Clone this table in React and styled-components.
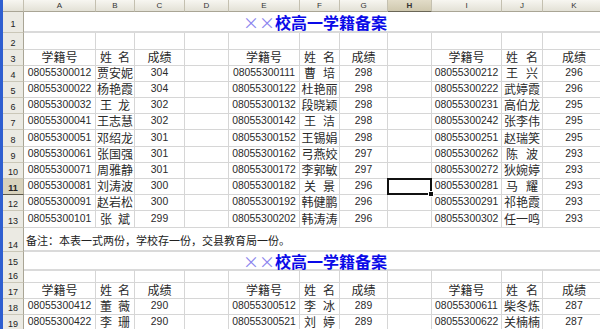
import styled, { createGlobalStyle } from "styled-components";

const COLS = "21px 72px 39px 50px 44px 71px 40px 48px 44px 70px 41px 63px";
const LETTERS = ["A", "B", "C", "D", "E", "F", "G", "H", "I", "J", "K"];
const CJK = `"Noto Sans CJK SC", "Liberation Sans", sans-serif`;

const GlobalStyle = createGlobalStyle`
  html, body {
    margin: 0;
    padding: 0;
    background: #fff;
    overflow: hidden;
  }
`;

const Window = styled.div`
  width: 600px;
  height: 329px;
  overflow: hidden;
  border-left: 3px solid #2f5fd0;
  box-sizing: border-box;
  background: #fff;
`;

const Sheet = styled.div`
  width: 603px;
`;

const Row = styled.div`
  display: grid;
  grid-template-columns: ${COLS};
  height: ${(p) => p.h}px;
`;

const ColHead = styled.div`
  box-sizing: border-box;
  background: ${(p) =>
    p.active
      ? "linear-gradient(#e2dcc8, #cfc8ae)"
      : "linear-gradient(#f7f6f1, #e3e1d6)"};
  border-right: 1px solid #c4c0b0;
  border-bottom: 1px solid ${(p) => (p.active ? "#6a6656" : "#a9a595")};
  font: ${(p) => (p.active ? "bold " : "")}8px "Liberation Sans", sans-serif;
  color: #333;
  display: flex;
  align-items: center;
  justify-content: center;
`;

const RowHead = styled.div`
  box-sizing: border-box;
  background: ${(p) => (p.active ? "#d8d2bc" : "#ebeae3")};
  border-right: 1px solid #a9a595;
  border-bottom: 1px solid ${(p) => (p.active ? "#5c584a" : "#cac7b8")};
  font: ${(p) => (p.active ? "bold " : "")}9px "Liberation Sans", sans-serif;
  line-height: 9px;
  color: #222;
  display: flex;
  align-items: flex-end;
  justify-content: center;
  padding-bottom: ${(p) => p.pb ?? 1}px;
  overflow: hidden;
`;

const Cell = styled.div`
  position: relative;
  box-sizing: border-box;
  border-right: 1px solid #d6d6d6;
  border-bottom: 1px solid #d6d6d6;
  display: flex;
  align-items: flex-end;
  justify-content: center;
  padding: 0 2px 1px;
  color: #2a2a2a;
  font: ${(p) => (p.cjk ? `12px ${CJK}` : `10.4px "Liberation Sans", sans-serif`)};
  line-height: 14px;
  white-space: nowrap;

  ${(p) =>
    p.selected &&
    `
    &::after {
      content: "";
      position: absolute;
      left: -1px; top: -1px; right: -1px; bottom: -1px;
      border: 2px solid #111;
    }
    &::before {
      content: "";
      position: absolute;
      right: -3px; bottom: -3px;
      width: 4px; height: 4px;
      background: #111;
      border: 1px solid #fff;
      z-index: 1;
    }
  `}
`;

const Spread = styled.span`
  display: flex;
  width: 100%;
  justify-content: space-between;
  padding: 0 2px;
`;

const Merged = styled.div`
  grid-column: 2 / -1;
  box-sizing: border-box;
  border-bottom: 2px solid #dadada;
  display: flex;
  align-items: center;
  justify-content: ${(p) => (p.left ? "flex-start" : "center")};
  padding-left: ${(p) => (p.left ? "2px" : "0")};
  padding-top: ${(p) => (p.left ? "2px" : "1px")};
  font: ${(p) => (p.left ? `11px ${CJK}` : `bold 16px ${CJK}`)};
  line-height: 16px;
  color: ${(p) => (p.left ? "#222" : "#0a0ae8")};
  white-space: nowrap;
`;

const Cross = styled.span`
  display: inline-block;
  width: 16px;
  text-align: center;
  font-weight: normal;
  color: #8a84ee;
`;

const block1 = [
  [["08055300012", "贾安妮", "304"], ["08055300111", "曹培", "298"], ["08055300212", "王兴", "296"]],
  [["08055300022", "杨艳霞", "304"], ["08055300122", "杜艳丽", "298"], ["08055300222", "武婷霞", "296"]],
  [["08055300032", "王龙", "302"], ["08055300132", "段晓颖", "298"], ["08055300231", "高伯龙", "295"]],
  [["08055300041", "王志慧", "302"], ["08055300142", "王洁", "298"], ["08055300242", "张李伟", "295"]],
  [["08055300051", "邓绍龙", "301"], ["08055300152", "王锡娟", "298"], ["08055300251", "赵瑞笑", "295"]],
  [["08055300061", "张国强", "301"], ["08055300162", "弓燕姣", "297"], ["08055300262", "陈波", "293"]],
  [["08055300071", "周雅静", "301"], ["08055300172", "李郭敏", "297"], ["08055300272", "狄婉婷", "293"]],
  [["08055300081", "刘涛波", "300"], ["08055300182", "关景", "296"], ["08055300281", "马耀", "293"]],
  [["08055300091", "赵岩松", "300"], ["08055300192", "韩健鹏", "296"], ["08055300291", "祁艳霞", "293"]],
  [["08055300101", "张斌", "299"], ["08055300202", "韩涛涛", "296"], ["08055300302", "任一鸣", "293"]],
];

const block2 = [
  [["08055300412", "董薇", "290"], ["08055300512", "李冰", "289"], ["08055300611", "柴冬炼", "287"]],
  [["08055300422", "李珊", "290"], ["08055300521", "刘婷", "289"], ["08055300622", "关楠楠", "287"]],
];

const heights1 = [16, 16, 16, 16, 17, 16, 16, 16, 16, 17];

const Name = ({ text }) =>
  text.length === 2 ? (
    <Spread>
      <span>{text[0]}</span>
      <span>{text[1]}</span>
    </Spread>
  ) : (
    text
  );

const DataRow = ({ n, h, groups, selectedCol }) => (
  <Row h={h}>
    <RowHead active={n === 11}>{n}</RowHead>
    {groups.map((g, gi) => [
      <Cell key={gi + "a"}>{g[0]}</Cell>,
      <Cell key={gi + "b"} cjk>
        <Name text={g[1]} />
      </Cell>,
      <Cell key={gi + "c"}>{g[2]}</Cell>,
      gi < 2 ? <Cell key={gi + "d"} selected={selectedCol && gi === 1} /> : null,
    ])}
  </Row>
);

const BlankRow = ({ n, h }) => (
  <Row h={h}>
    <RowHead>{n}</RowHead>
    {LETTERS.map((l) => (
      <Cell key={l} />
    ))}
  </Row>
);

const HeadRow = ({ n }) => (
  <Row h={16}>
    <RowHead>{n}</RowHead>
    {[0, 1, 2].map((gi) => [
      <Cell key={gi + "a"} cjk>学籍号</Cell>,
      <Cell key={gi + "b"} cjk>
        <Name text="姓名" />
      </Cell>,
      <Cell key={gi + "c"} cjk>成绩</Cell>,
      gi < 2 ? <Cell key={gi + "d"} /> : null,
    ])}
  </Row>
);

const TitleRow = ({ n, h }) => (
  <Row h={h}>
    <RowHead pb={3}>{n}</RowHead>
    <Merged>
      <Cross>×</Cross>
      <Cross>×</Cross>
      校高一学籍备案
    </Merged>
  </Row>
);

export default function App() {
  return (
    <>
      <GlobalStyle />
      <Window>
        <Sheet>
          <Row h={12}>
            <ColHead />
            {LETTERS.map((l) => (
              <ColHead key={l} active={l === "H"}>
                {l}
              </ColHead>
            ))}
          </Row>
          <TitleRow n={1} h={21} />
          <BlankRow n={2} h={17} />
          <HeadRow n={3} />
          {block1.map((groups, i) => (
            <DataRow
              key={i}
              n={i + 4}
              h={heights1[i]}
              groups={groups}
              selectedCol={i + 4 === 11}
            />
          ))}
          <Row h={24}>
            <RowHead>14</RowHead>
            <Merged left>备注：本表一式两份，学校存一份，交县教育局一份。</Merged>
          </Row>
          <TitleRow n={15} h={18} />
          <BlankRow n={16} h={13} />
          <HeadRow n={17} />
          {block2.map((groups, i) => (
            <DataRow key={i} n={i + 18} h={16} groups={groups} />
          ))}
        </Sheet>
      </Window>
    </>
  );
}
